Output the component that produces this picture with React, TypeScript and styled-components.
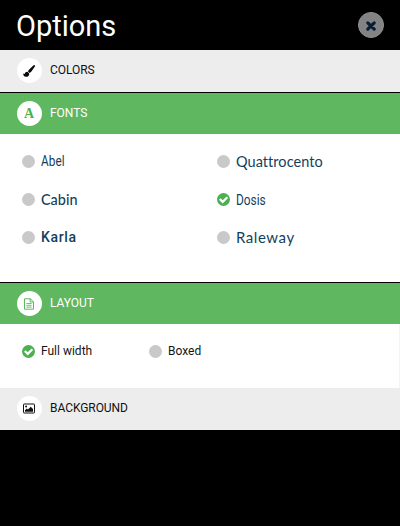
import React from "react";
import styled, { createGlobalStyle } from "styled-components";

const GlobalStyle = createGlobalStyle`
  * { box-sizing: border-box; }
  body { margin: 0; background: #000; font-family: Roboto, "Liberation Sans", sans-serif; }
`;

const Panel = styled.main`
  width: 400px;
  height: 526px;
  overflow: hidden;
  background: #000;
`;

const Header = styled.header`
  display: flex;
  justify-content: space-between;
  height: 50px;
  padding: 0 16px 0 16px;
`;

const Title = styled.h1`
  margin: 0;
  color: #fff;
  font-size: 29px;
  font-weight: 400;
  line-height: 53px;
  letter-spacing: 0;
`;

const CloseButton = styled.button`
  display: flex;
  align-items: center;
  justify-content: center;
  width: 26px;
  height: 26px;
  margin: 12px 0 0;
  padding: 2px 0 0;
  border: 1px solid #919191;
  border-radius: 50%;
  background: #838383;
`;

const Bar = styled.div<{ $active?: boolean }>`
  display: flex;
  align-items: center;
  height: 42px;
  padding: 0 0 ${(p) => (p.$active ? 0 : 1)}px 16.5px;
  border-top: ${(p) => (p.$active ? "1px solid #000" : "0")};
  background: ${(p) => (p.$active ? "#5fb760" : "#ededed")};
  color: ${(p) => (p.$active ? "#fff" : "#111")};
`;

const IconDisc = styled.span`
  display: flex;
  align-items: center;
  justify-content: center;
  flex: none;
  width: 25px;
  height: 25px;
  margin-right: 8.5px;
  border-radius: 50%;
  background: #fff;
`;

const BarLabel = styled.span`
  margin-bottom: 1px;
  font-size: 12px;
  line-height: 16px;
  letter-spacing: -0.05px;
`;

const FontGrid = styled.div`
  display: grid;
  grid-template-columns: 195px 160px;
  grid-auto-rows: 37.7px;
  height: 148px;
  padding: 9px 0 0 21.5px;
  background: #fff;
`;

const LayoutRow = styled.div`
  display: grid;
  grid-template-columns: 127px 120px;
  align-items: center;
  height: 64px;
  padding: 0 0 9px 21.5px;
  border-right: 1px solid #f3f3f3;
  background: #fff;
`;

const Option = styled.div`
  display: flex;
  align-items: center;
`;

const Dot = styled.span`
  width: 13px;
  height: 13px;
  flex: none;
  border-radius: 50%;
  background: #c9c9c9;
`;

const FontName = styled.span<{
  $family: string; $size: number; $scale?: number; $spacing?: number; $weight?: number; $lift?: number; $gap?: number;
}>`
  margin: 0 0 ${(p) => p.$lift ?? 0}px ${(p) => p.$gap ?? 6}px;
  color: #143f5c;
  font-family: ${(p) => p.$family}, sans-serif;
  font-size: ${(p) => p.$size}px;
  font-weight: ${(p) => p.$weight ?? 400};
  letter-spacing: ${(p) => p.$spacing ?? 0}px;
  line-height: 20px;
  transform: scaleX(${(p) => p.$scale ?? 1});
  transform-origin: left center;
`;

const LayoutName = styled.span`
  margin: 0 0 2px 6.5px;
  color: #151515;
  font-size: 12px;
  line-height: 16px;
`;

const Check = () => (
  <svg width="13" height="13" viewBox="0 0 13 13">
    <circle cx="6.5" cy="6.5" r="6.5" fill="#4caf50" />
    <path d="M2.8 6 5.7 8.9 10.4 4.2" fill="none" stroke="#fff" strokeWidth="2.2" />
  </svg>
);

const Cross = () => (
  <svg width="10" height="10" viewBox="0 0 10 10">
    <path d="M1.8 1.8 8.2 8.2M8.2 1.8 1.8 8.2" stroke="#071d35" strokeWidth="3.1" strokeLinecap="round" />
  </svg>
);

const Brush = () => (
  <svg width="12" height="12" viewBox="0 0 12 12" fill="#090909">
    <path d="M11.5.2c.6.3.6.9.2 1.5L8.4 6.6c-.5.7-1.1 1.1-1.8 1.3L5 6.4c.2-.7.5-1.2 1-1.7L10.3.6c.4-.4.8-.6 1.2-.4Z" />
    <path d="m4.5 6.8 1.7 1.6c.2 2.1-1.2 3.4-3.2 3.4C.9 11.8.2 10.1.2 8.4c.6.4 1.1.7 1.5.3.3-1.2 1.4-2 2.8-1.9Z" />
  </svg>
);

const LetterA = styled.span`
  color: #4caf50;
  font-family: "Liberation Serif", serif;
  font-size: 14px;
  font-weight: 700;
  line-height: 14px;
`;

const Page = () => (
  <svg width="10" height="12" viewBox="0 0 10 12" fill="none" stroke="#5fb760">
    <path d="M.5.8H6.4L9.5 3.8V11.2H.5ZM6.2.8V4H9.5" strokeLinejoin="round" />
    <path d="M2.4 5.5H7.6M2.4 7.3H7.6M2.4 9.1H7.6" strokeWidth=".9" />
  </svg>
);

const Picture = () => (
  <svg width="12" height="11" viewBox="0 0 12 11" fill="#111">
    <rect x=".5" y="1" width="11" height="9" rx=".6" fill="none" stroke="#111" />
    <circle cx="3.1" cy="3.5" r="1" />
    <path d="M2 8.7V7.2L3.8 5.5 5 6.6 7.7 3.7 10 6V8.7Z" />
  </svg>
);

const fonts = [
  { name: "Abel", family: "Roboto", size: 14.5, scale: 0.81, spacing: 0.1, lift: -1 },
  { name: "Quattrocento", family: "Lato", size: 14.5, spacing: 0.05, lift: 0, gap: 6.5 },
  { name: "Cabin", family: "Lato", size: 15, scale: 0.96, weight: 500, lift: 1 },
  { name: "Dosis", family: "Roboto", size: 14.5, scale: 0.82, lift: -2, gap: 6.5 },
  { name: "Karla", family: "Roboto", size: 14, spacing: 0.65, weight: 500, gap: 6.5 },
  { name: "Raleway", family: "Lato", size: 15, spacing: 0.55, lift: 1, gap: 6.5 },
];

export default function App() {
  return (
    <Panel>
      <GlobalStyle />
      <Header>
        <Title>Options</Title>
        <CloseButton aria-label="Close"><Cross /></CloseButton>
      </Header>
      <Bar><IconDisc><Brush /></IconDisc><BarLabel>COLORS</BarLabel></Bar>
      <Bar $active><IconDisc><LetterA>A</LetterA></IconDisc><BarLabel>FONTS</BarLabel></Bar>
      <FontGrid>
        {fonts.map((f) => (
          <Option key={f.name}>
            {f.name === "Dosis" ? <Check /> : <Dot />}
            <FontName $family={f.family} $size={f.size} $scale={f.scale} $spacing={f.spacing} $weight={f.weight} $lift={f.lift} $gap={f.gap}>
              {f.name}
            </FontName>
          </Option>
        ))}
      </FontGrid>
      <Bar $active><IconDisc><Page /></IconDisc><BarLabel>LAYOUT</BarLabel></Bar>
      <LayoutRow>
        <Option><Check /><LayoutName>Full width</LayoutName></Option>
        <Option><Dot /><LayoutName>Boxed</LayoutName></Option>
      </LayoutRow>
      <Bar><IconDisc><Picture /></IconDisc><BarLabel>BACKGROUND</BarLabel></Bar>
    </Panel>
  );
}
